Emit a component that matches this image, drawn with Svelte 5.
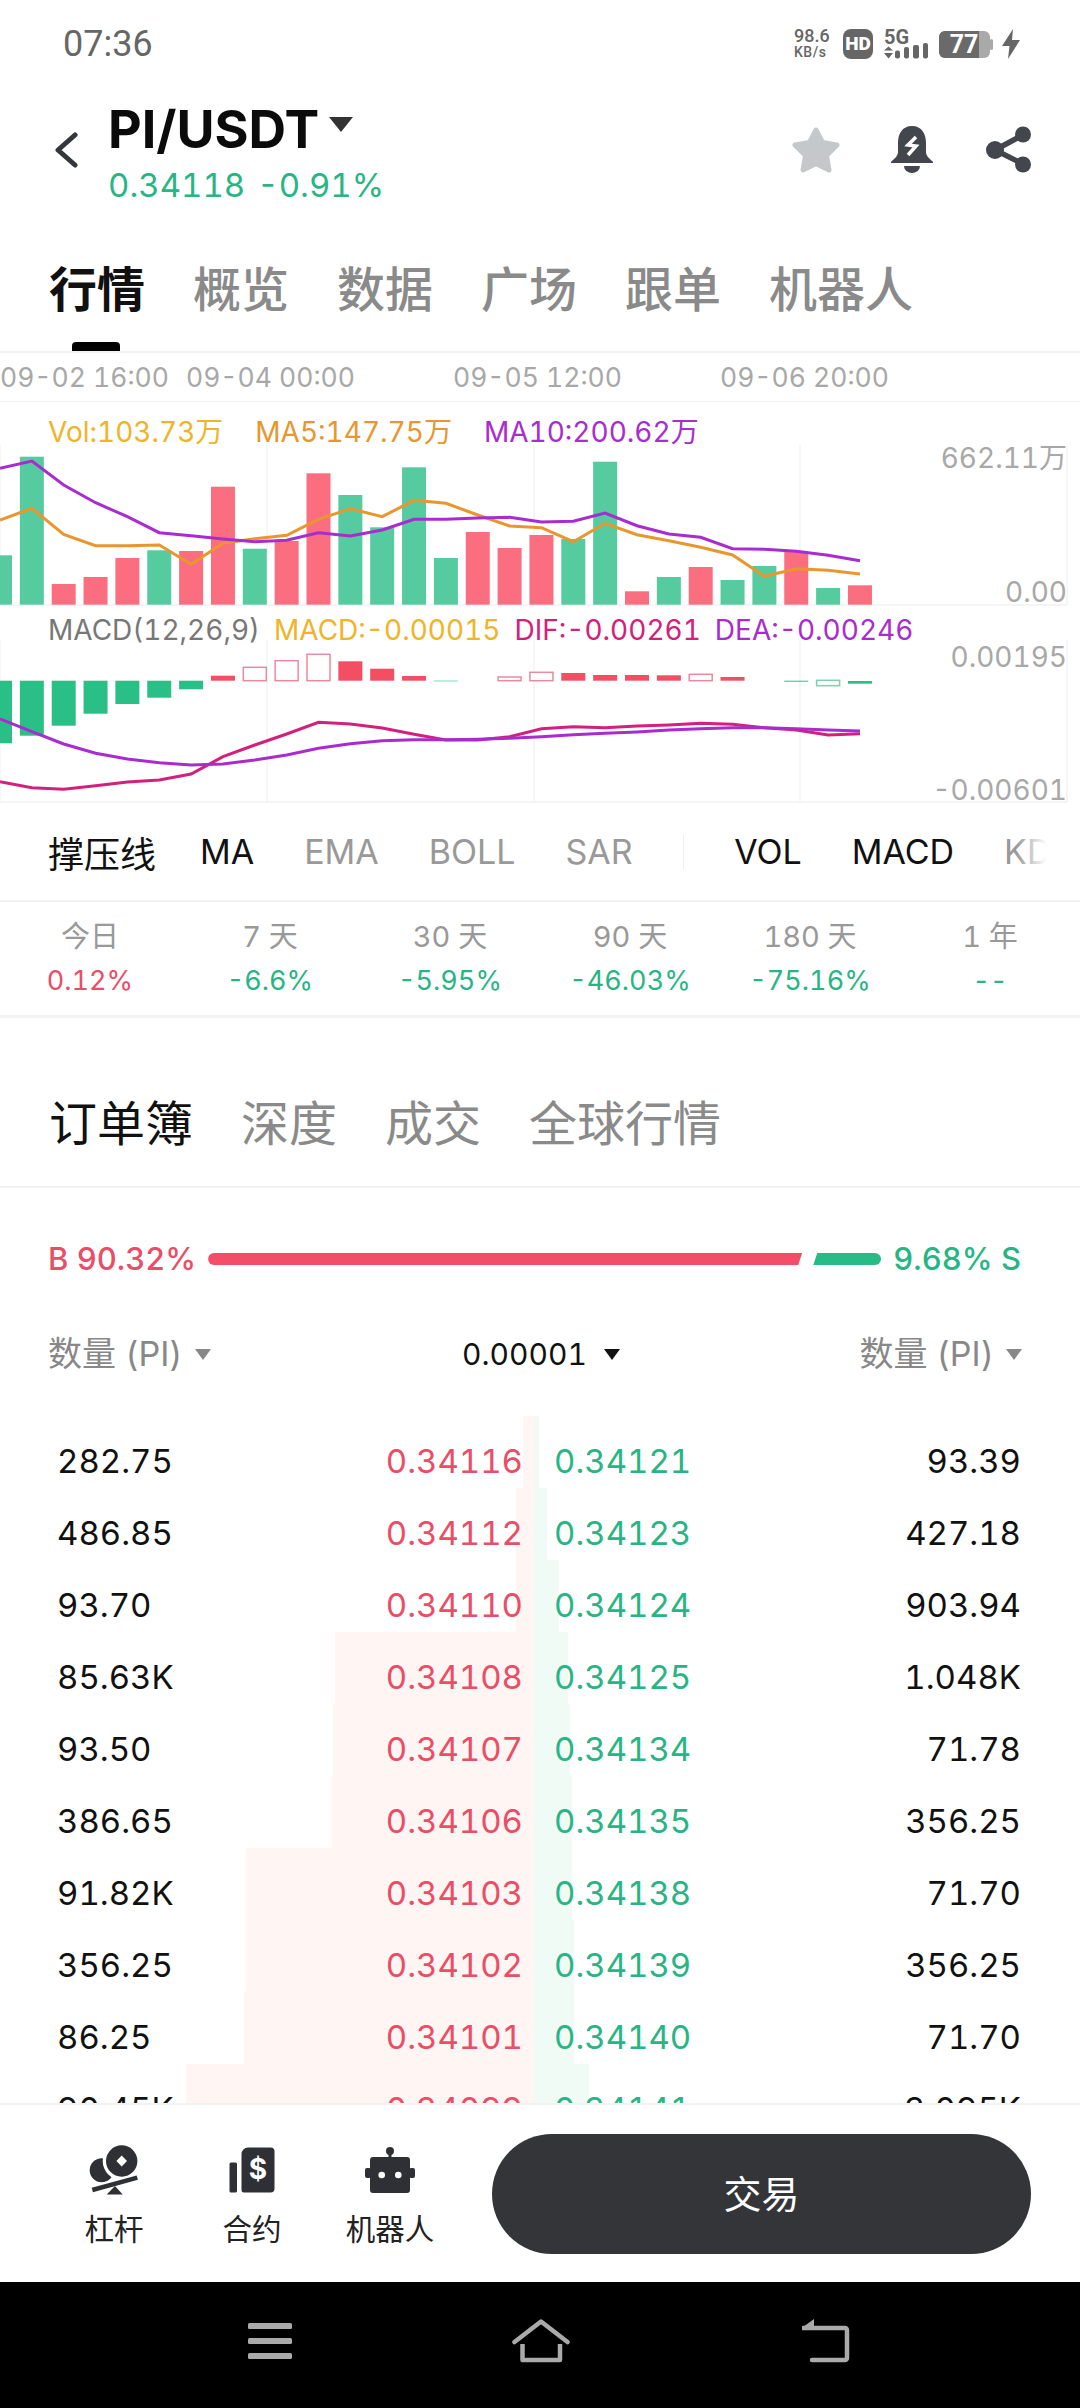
<script>
	const STEP = 31.85;

	// volume bars: top in chart px, green or red
	const volBars = [
		[153.3, 'g'], [54.7, 'g'], [182, 'r'], [175, 'r'], [156, 'r'], [148.3, 'g'], [149, 'r'],
		[84.7, 'r'], [146.7, 'g'], [139, 'r'], [71.3, 'r'], [93, 'g'], [125.3, 'g'], [65.3, 'g'],
		[156, 'g'], [130, 'r'], [146, 'r'], [133, 'r'], [137, 'g'], [59.7, 'g'], [189.3, 'r'],
		[175, 'g'], [165, 'r'], [178, 'g'], [164, 'g'], [149.7, 'r'], [186, 'g'], [183.3, 'r']
	];
	const ma10 = [115, 93, 165, 218, 260, 308, 317, 327, 335, 331, 308, 318, 300, 268, 268, 264, 262, 276, 274, 249, 287, 312, 322, 356, 358, 364, 376, 392];
	const ma5 = [270, 235, 313, 347, 347, 345, 403, 340, 326, 316, 268, 236, 260, 211, 220, 255, 288, 293, 335, 280, 314, 332, 352, 375, 439, 416, 421, 432];

	const BASE = 74.7;
	// macd histogram: top, bottom, kind
	const macdBars = [
		[BASE, 137.3, 'g'], [BASE, 129.7, 'g'], [BASE, 119.7, 'g'], [BASE, 107.7, 'g'], [BASE, 98, 'g'], [BASE, 91.7, 'g'], [BASE, 83.3, 'g'],
		[69.7, BASE, 'r'], [61.3, BASE, 'ro'], [54.7, BASE, 'ro'], [48.3, BASE, 'ro'], [55.3, BASE, 'r'], [62.7, BASE, 'r'], [70, BASE, 'r'],
		[BASE, 75.3, 'g'], null, [71, BASE, 'ro'], [66.3, BASE, 'ro'], [67, BASE, 'r'], [69, BASE, 'r'], [69, BASE, 'r'], [69.3, BASE, 'r'],
		[68.3, BASE, 'ro'], [71, BASE, 'r'], null, [74.7, 75.7, 'g'], [74.3, 79.7, 'go'], [75, 77.7, 'g']
	];
	const dif = [485, 503, 508, 497, 486, 480, 462, 410, 375, 342, 307, 312, 324, 343, 360, 360, 350, 326, 320, 323, 318, 315, 310, 313, 323, 330, 345, 341];
	const dea = [297, 335, 372, 400, 417, 428, 435, 432, 420, 405, 385, 371, 362, 359, 359, 358, 355, 350, 344, 340, 336, 330, 326, 323, 323, 326, 330, 333];

	const line = (vals, off) => vals.map((v, i) => `${(i * STEP).toFixed(1)},${(off + v / 3).toFixed(1)}`).join(' ');

	const times = [
		{ text: '09-02 16:00', left: 0 },
		{ text: '09-04 00:00', left: 186 },
		{ text: '09-05 12:00', left: 453 },
		{ text: '09-06 20:00', left: 720 }
	];

	const periods = [
		{ label: '今日', value: '0.12%', up: true },
		{ label: '7 天', value: '-6.6%' },
		{ label: '30 天', value: '-5.95%' },
		{ label: '90 天', value: '-46.03%' },
		{ label: '180 天', value: '-75.16%' },
		{ label: '1 年', value: '--' }
	];

	// bid, bid price, ask price, ask, red bar left edge, green bar right edge
	const book = [
		['282.75', '0.34116', '0.34121', '93.39', 523, 539],
		['486.85', '0.34112', '0.34123', '427.18', 516, 547],
		['93.70', '0.34110', '0.34124', '903.94', 516, 559],
		['85.63K', '0.34108', '0.34125', '1.048K', 335, 568],
		['93.50', '0.34107', '0.34134', '71.78', 333, 570],
		['386.65', '0.34106', '0.34135', '356.25', 332, 572],
		['91.82K', '0.34103', '0.34138', '71.70', 246, 572],
		['356.25', '0.34102', '0.34139', '356.25', 246, 574],
		['86.25', '0.34101', '0.34140', '71.70', 244, 574],
		['90.45K', '0.34099', '0.34141', '3.095K', 186, 589]
	];
</script>

<div class="page">
	<div class="status">
		<span class="clock">07:36</span>
		<div class="status-icons">
			<div class="net"><span>98.6</span><span class="net-unit">KB/s</span></div>
			<div class="hd">HD</div>
			<svg class="sig" width="45" height="30" viewBox="0 0 45 30">
				<text x="0" y="15" class="sig-text">5G</text>
				<path d="M4.5 17.5 L9 21.5 L0 21.5Z M4.5 29.5 L9 24 L0 24Z" fill="#666" />
				<rect x="11" y="21.5" width="5" height="8" rx="2" fill="#666" />
				<rect x="20" y="18" width="5" height="11.5" rx="2" fill="#666" />
				<rect x="29" y="16" width="6" height="13.5" rx="2" fill="#666" />
				<rect x="39" y="14" width="5" height="15.5" rx="2" fill="#666" />
			</svg>
			<svg class="batt" width="54" height="27" viewBox="0 0 54 27">
				<rect x="0" y="0" width="51" height="27" rx="6" fill="#a9a9a9" />
				<path d="M6 0 H40 V27 H6 A6 6 0 0 1 0 21 V6 A6 6 0 0 1 6 0Z" fill="#6a6a6a" />
				<rect x="51" y="8" width="3" height="11" rx="1.5" fill="#a9a9a9" />
				<text x="25" y="22" class="batt-text">77</text>
			</svg>
			<svg width="18" height="30" viewBox="0 0 18 30">
				<path d="M11 0 L0 17 L7.5 17 L6 30 L18 11 L10 11Z" fill="#666" />
			</svg>
		</div>
	</div>

	<div class="header">
		<svg class="back" width="24" height="36" viewBox="0 0 24 36">
			<path d="M21 3 L4 18 L21 33" fill="none" stroke="#33363b" stroke-width="5" stroke-linecap="round" stroke-linejoin="round" />
		</svg>
		<div class="pair">
			<div class="pair-title">PI/USDT <i class="pair-caret"></i></div>
			<div class="pair-price"><span>0.34118</span><span>-0.91%</span></div>
		</div>
		<div class="actions">
			<svg width="50" height="47" viewBox="0 0 50 47">
				<path d="M25 4 L31.5 16.5 L46 19 L35.5 29.5 L38 44 L25 37.5 L12 44 L14.5 29.5 L4 19 L18.5 16.5Z" fill="#c4c8cb" stroke="#c4c8cb" stroke-width="5" stroke-linejoin="round" />
			</svg>
			<svg class="bell" width="42" height="47" viewBox="0 0 42 47">
				<path d="M21 0 C11 0 7 8 7 17 L7 26 C7 30 3 33 0 36 L0 37 L42 37 L42 36 C39 33 35 30 35 26 L35 17 C35 8 31 0 21 0Z" fill="#43464d" />
				<path d="M13 40 H29 A8 7 0 0 1 13 40Z" fill="#43464d" />
				<path d="M25 11 L17 19 L25 20 L17 29" fill="none" stroke="#fff" stroke-width="3.5" />
			</svg>
			<svg class="share" width="45" height="47" viewBox="0 0 45 47">
				<path d="M37 9 L9 24 L37 38" fill="none" stroke="#43464d" stroke-width="5.5" />
				<circle cx="37" cy="8.5" r="8" fill="#43464d" />
				<circle cx="9" cy="24" r="9" fill="#43464d" />
				<circle cx="37" cy="38.5" r="8" fill="#43464d" />
			</svg>
		</div>
	</div>

	<div class="tabs main-tabs">
		<span class="tab on">行情</span>
		<span class="tab">概览</span>
		<span class="tab">数据</span>
		<span class="tab">广场</span>
		<span class="tab">跟单</span>
		<span class="tab">机器人</span>
	</div>

	<div class="time-axis">
		{#each times as t}
			<span style="left: {t.left}px">{t.text}</span>
		{/each}
	</div>

	<div class="pane vol-pane">
		<svg class="plot" width="1080" height="204" viewBox="0 0 1080 204">
			{#each [0, 267, 534, 800, 1067] as x}
				<line x1={x} x2={x} y1="43" y2="203" stroke="#f3f3f3" stroke-width="1.5" />
			{/each}
			<line x1="0" x2="1067" y1="203" y2="203" stroke="#f2f2f2" stroke-width="1.5" />
			{#each volBars as [top, kind], i}
				<rect x={i * STEP - 12} y={top} width="24" height={202.7 - top} fill={kind === 'g' ? '#55cb9f' : '#fb6e80'} />
			{/each}
			<polyline points={line(ma5, 28)} fill="none" stroke="#e8962e" stroke-width="3" />
			<polyline points={line(ma10, 28)} fill="none" stroke="#a82ccf" stroke-width="3" />
		</svg>
		<div class="legend vol-legend">
			<span class="c-yellow">Vol:103.73万</span>
			<span class="c-orange">MA5:147.75万</span>
			<span class="c-purple">MA10:200.62万</span>
		</div>
		<span class="axis-label" style="top: 36px">662.11万</span>
		<span class="axis-label" style="top: 170px">0.00</span>
	</div>

	<div class="pane macd-pane">
		<svg class="plot" width="1080" height="197" viewBox="0 0 1080 197">
			{#each [0, 267, 534, 800, 1067] as x}
				<line x1={x} x2={x} y1="34" y2="196" stroke="#f3f3f3" stroke-width="1.5" />
			{/each}
			<line x1="0" x2="1067" y1="196" y2="196" stroke="#f0f0f0" stroke-width="1.5" />
			{#each macdBars as bar, i}
				{#if bar}
					{#if bar[2] === 'ro' || bar[2] === 'go'}
						<rect x={i * STEP - 11.5} y={bar[0]} width="23" height={bar[1] - bar[0]} fill="#fff" stroke={bar[2] === 'ro' ? '#e98ba0' : '#7fcfb0'} stroke-width="1.5" />
					{:else}
						<rect x={i * STEP - 12} y={bar[0]} width="24" height={bar[1] - bar[0]} fill={bar[2] === 'g' ? '#2bbf88' : '#f44e63'} />
					{/if}
				{/if}
			{/each}
			<polyline points={line(dif, 14)} fill="none" stroke="#d3207c" stroke-width="3" />
			<polyline points={line(dea, 14)} fill="none" stroke="#a82ccf" stroke-width="3" />
		</svg>
		<div class="legend macd-legend">
			<span class="c-grey">MACD(12,26,9)</span>
			<span class="c-yellow">MACD:-0.00015</span>
			<span class="c-pink">DIF:-0.00261</span>
			<span class="c-purple">DEA:-0.00246</span>
		</div>
		<span class="axis-label" style="top: 31px">0.00195</span>
		<span class="axis-label" style="top: 164px">-0.00601</span>
	</div>

	<div class="indicators">
		<span class="ind-first">撑压线</span>
		<span class="ind-on">MA</span>
		<span>EMA</span>
		<span>BOLL</span>
		<span>SAR</span>
		<i class="ind-sep"></i>
		<span class="ind-on">VOL</span>
		<span class="ind-on">MACD</span>
		<span>KD</span>
	</div>

	<div class="periods">
		{#each periods as p}
			<div class="period">
				<span class="period-label">{p.label}</span>
				<span class={p.up ? 'c-red' : 'c-green'}>{p.value}</span>
			</div>
		{/each}
	</div>

	<div class="tabs book-tabs">
		<span class="tab on">订单簿</span>
		<span class="tab">深度</span>
		<span class="tab">成交</span>
		<span class="tab">全球行情</span>
	</div>

	<div class="ratio">
		<span class="c-red">B 90.32%</span>
		<div class="ratio-bar">
			<div class="ratio-buy"></div>
			<div class="ratio-sell"></div>
		</div>
		<span class="c-green">9.68% S</span>
	</div>

	<div class="book-head">
		<span class="head-side">数量 (PI)<i class="caret"></i></span>
		<span class="head-mid">0.00001<i class="caret dark"></i></span>
		<span class="head-side">数量 (PI)<i class="caret"></i></span>
	</div>

	<div class="book">
		{#each book as [bid, bidPrice, askPrice, ask, redLeft, greenRight]}
			<div class="row">
				<i class="depth red" style="left: {redLeft}px; width: {534 - redLeft}px"></i>
				<i class="depth green" style="width: {greenRight - 534}px"></i>
				<div class="side bid-side">
					<span>{bid}</span>
					<span class="c-red">{bidPrice}</span>
				</div>
				<div class="side ask-side">
					<span class="c-green">{askPrice}</span>
					<span>{ask}</span>
				</div>
			</div>
		{/each}
	</div>

	<div class="footer">
		<div class="foot-item">
			<svg width="50" height="50" viewBox="0 0 50 50">
				<circle cx="12.7" cy="25.3" r="12" fill="#2e3036" />
				<circle cx="32.7" cy="16" r="19" fill="#fff" />
				<line x1="1" y1="45.6" x2="50" y2="32.2" stroke="#fff" stroke-width="9" />
				<circle cx="32.7" cy="16" r="15.7" fill="#2e3036" />
				<path d="M32.7 10.5 L38 16 L32.7 21.5 L27.4 16Z" fill="#fff" />
				<line x1="3.3" y1="45" x2="48.3" y2="32.7" stroke="#2e3036" stroke-width="4.5" />
				<path d="M26 41 L17.7 49.5 L33.7 49.5Z" fill="#2e3036" />
			</svg>
			<span>杠杆</span>
		</div>
		<div class="foot-item">
			<svg width="50" height="50" viewBox="0 0 50 50">
				<rect x="2.5" y="17.5" width="7.5" height="30" rx="1.5" fill="#2e3036" />
				<path d="M21 2.5 H43.5 A4 4 0 0 1 47.5 6.5 V43.5 A4 4 0 0 1 43.5 47.5 H17 A2.5 2.5 0 0 1 14.5 45 V9 A6.5 6.5 0 0 1 21 2.5Z" fill="#2e3036" />
				<text x="31" y="34" class="dollar">$</text>
			</svg>
			<span>合约</span>
		</div>
		<div class="foot-item">
			<svg width="50" height="50" viewBox="0 0 50 50">
				<circle cx="25" cy="6" r="4" fill="#2e3036" />
				<rect x="23.5" y="6" width="3" height="7" fill="#2e3036" />
				<rect x="5" y="12" width="40" height="36" rx="3" fill="#2e3036" />
				<rect x="0" y="23" width="6" height="10" rx="2" fill="#2e3036" />
				<rect x="44" y="23" width="6" height="10" rx="2" fill="#2e3036" />
				<circle cx="16.7" cy="30" r="3.3" fill="#fff" />
				<circle cx="33.3" cy="30" r="3.3" fill="#fff" />
			</svg>
			<span>机器人</span>
		</div>
		<div class="trade">交易</div>
	</div>

	<div class="navbar">
		<svg width="44" height="36" viewBox="0 0 44 36">
			<rect y="0" width="44" height="6" rx="1.5" fill="#aaa" />
			<rect y="15" width="44" height="6" rx="1.5" fill="#aaa" />
			<rect y="30" width="44" height="6" rx="1.5" fill="#aaa" />
		</svg>
		<svg class="nav-home" width="58" height="44" viewBox="0 0 58 44">
			<path d="M2.5 23 L29 2.5 L55.5 23" fill="none" stroke="#aaa" stroke-width="4.5" stroke-linejoin="round" stroke-linecap="round" />
			<path d="M10.5 25 V41 H48 V25" fill="none" stroke="#aaa" stroke-width="4.5" stroke-linejoin="round" />
		</svg>
		<svg width="48" height="44" viewBox="0 0 48 44">
			<path d="M1 9 H43 A2 2 0 0 1 45 11 V39 A2 2 0 0 1 43 41 H10" fill="none" stroke="#aaa" stroke-width="4.5" stroke-linecap="round" />
			<path d="M12 0 L1 8 L12 11Z" fill="#aaa" />
		</svg>
	</div>
</div>

<style>
	:global(body) {
		margin: 0;
		background: #fff;
	}

	.page {
		width: 1080px;
		height: 2408px;
		display: flex;
		flex-direction: column;
		overflow: hidden;
		font-family: Inter, 'Noto Sans CJK SC', sans-serif;
		font-variant-numeric: tabular-nums;
		color: #111;
		background: #fff;
	}

	.c-yellow { color: #f0b429; }
	.c-orange { color: #e8962e; }
	.c-purple { color: #a82ccf; }
	.c-pink { color: #d3207c; }
	.c-grey { color: #777; }
	.c-red { color: #ea4d66; }
	.c-green { color: #28b585; }

	.status {
		height: 86px;
		flex: none;
		display: flex;
		justify-content: space-between;
		align-items: center;
		padding: 2px 60px 0 63px;
		box-sizing: border-box;
	}

	.clock {
		font-family: Roboto, sans-serif;
		font-size: 36px;
		color: #666;
	}

	.status-icons {
		display: flex;
		align-items: center;
	}

	.net {
		display: flex;
		flex-direction: column;
		align-items: flex-start;
		font-family: Roboto, sans-serif;
		font-size: 18px;
		font-weight: 500;
		line-height: 16px;
		color: #666;
		width: 49px;
	}

	.net-unit {
		font-size: 14px;
		letter-spacing: 0.5px;
	}

	.hd {
		width: 30px;
		height: 30px;
		border-radius: 8px;
		background: #666;
		color: #fff;
		font-family: Roboto, sans-serif;
		font-size: 19px;
		font-weight: 900;
		line-height: 30px;
		text-align: center;
		margin-right: 11px;
	}

	.sig {
		margin-right: 10px;
	}

	.sig-text {
		font-family: Roboto, sans-serif;
		font-size: 20px;
		font-weight: 700;
		fill: #666;
	}

	.batt {
		margin-right: 9px;
	}

	.batt-text {
		font-family: Roboto, sans-serif;
		font-size: 25px;
		font-weight: 700;
		fill: #fff;
		text-anchor: middle;
	}

	.header {
		height: 130px;
		flex: none;
		display: flex;
		align-items: flex-start;
		padding: 15px 49px 0 54px;
		box-sizing: border-box;
	}

	.back {
		margin: 31px 30px 0 0;
	}

	.pair {
		flex: 1;
	}

	.pair-title {
		font-size: 52px;
		font-weight: 700;
		line-height: 57px;
		color: #0b0b0b;
		display: flex;
		align-items: center;
		gap: 6px;
	}

	.pair-caret {
		border-left: 12px solid transparent;
		border-right: 12px solid transparent;
		border-top: 15px solid #333;
		margin: 0 0 10px 4px;
	}

	.pair-price {
		margin-top: 7px;
		display: flex;
		gap: 12px;
		font-size: 33px;
		line-height: 40px;
		color: #28b585;
	}

	.actions {
		display: flex;
		align-items: center;
		margin-top: 25px;
	}

	.bell {
		margin: 0 53px 0 50px;
	}

	.tabs {
		flex: none;
		display: flex;
		box-sizing: border-box;
		border-bottom: 2px solid #f2f2f2;
		padding-left: 49px;
		gap: 48px;
	}

	.main-tabs {
		height: 137px;
		padding-top: 44px;
	}

	.book-tabs {
		height: 170px;
		padding-top: 76px;
	}

	.tab {
		position: relative;
		font-size: 48px;
		line-height: 60px;
		color: #8a8a8a;
	}

	.main-tabs .tab {
		font-weight: 500;
	}

	.main-tabs .tab.on {
		font-weight: 700;
	}

	.tab.on {
		color: #111;
	}

	.main-tabs .tab.on::after {
		content: '';
		position: absolute;
		left: 23px;
		top: 82px;
		width: 48px;
		height: 9px;
		border-radius: 4px 4px 0 0;
		background: #000;
	}

	.time-axis {
		position: relative;
		height: 49px;
		flex: none;
		box-sizing: border-box;
		border-bottom: 1.5px solid #f3f3f3;
		font-size: 26.5px;
		line-height: 48px;
		color: #a8a8a8;
	}

	.time-axis span {
		position: absolute;
		top: 0;
		white-space: nowrap;
	}

	.pane {
		position: relative;
		flex: none;
	}

	.vol-pane {
		height: 204px;
	}

	.macd-pane {
		height: 197px;
	}

	.plot {
		position: absolute;
		left: 0;
		top: 0;
	}

	.legend {
		position: relative;
		display: flex;
		padding-left: 48px;
		font-size: 28px;
		line-height: 40px;
		white-space: nowrap;
	}

	.vol-legend {
		padding-top: 10px;
		gap: 32px;
	}

	.macd-legend {
		padding-top: 4px;
		gap: 14px;
	}

	.axis-label {
		position: absolute;
		right: 13px;
		font-size: 28px;
		line-height: 40px;
		color: #a8a8a8;
	}

	.indicators {
		position: relative;
		height: 99px;
		flex: none;
		box-sizing: border-box;
		display: flex;
		align-items: center;
		gap: 50px;
		padding-left: 48px;
		border-bottom: 2px solid #f2f2f2;
		font-size: 34px;
		color: #999;
		overflow: hidden;
		white-space: nowrap;
	}

	.indicators::after {
		content: '';
		position: absolute;
		right: 20px;
		top: 0;
		bottom: 0;
		width: 44px;
		background: linear-gradient(to right, rgba(255, 255, 255, 0), #fff 70%);
	}

	.ind-first {
		font-size: 36px;
		color: #111;
		margin-right: -6px;
	}

	.ind-on {
		color: #111;
	}

	.ind-sep {
		width: 1.5px;
		height: 34px;
		background: #eee;
	}

	.periods {
		height: 116px;
		flex: none;
		box-sizing: border-box;
		display: grid;
		grid-template-columns: repeat(6, 180px);
		padding-top: 15px;
		border-bottom: 3px solid #f3f3f3;
		font-size: 27px;
	}

	.period {
		display: flex;
		flex-direction: column;
		align-items: center;
		line-height: 43px;
	}

	.period-label {
		color: #999;
		font-size: 29px;
		line-height: 40px;
		margin-bottom: 2px;
	}

	.ratio {
		flex: none;
		display: flex;
		align-items: center;
		gap: 12px;
		padding: 49px 59px 0 48px;
		font-size: 31px;
		font-weight: 500;
		line-height: 44px;
	}

	.ratio-bar {
		flex: 1;
		display: flex;
		justify-content: space-between;
		height: 12px;
	}

	.ratio-buy {
		width: 594px;
		border-radius: 6px 0 0 6px;
		background: #f24e68;
		clip-path: polygon(0 0, 100% 0, calc(100% - 4px) 100%, 0 100%);
	}

	.ratio-sell {
		width: 68px;
		border-radius: 0 6px 6px 0;
		background: #28bb87;
		clip-path: polygon(4px 0, 100% 0, 100% 100%, 0 100%);
	}

	.book-head {
		flex: none;
		display: flex;
		justify-content: space-between;
		align-items: center;
		padding: 51px 58px 0 48px;
		font-size: 34px;
		line-height: 44px;
		color: #888;
	}

	.head-side {
		display: flex;
		align-items: center;
	}

	.head-mid {
		display: flex;
		align-items: center;
		margin-left: 12px;
		font-size: 30px;
		color: #111;
	}

	.caret {
		margin-left: 12px;
		border-left: 8px solid transparent;
		border-right: 8px solid transparent;
		border-top: 11px solid #888;
	}

	.caret.dark {
		margin-left: 17px;
		border-top-color: #111;
	}

	.book {
		flex: 1;
		min-height: 0;
		overflow: hidden;
		padding-top: 49px;
	}

	.row {
		position: relative;
		height: 72px;
		display: flex;
		gap: 31px;
		padding: 0 59px 0 57px;
		font-size: 33px;
		line-height: 72px;
	}

	.depth {
		position: absolute;
		top: -9px;
		height: 72px;
		z-index: 0;
	}

	.depth.red {
		background: #fff5f3;
	}

	.depth.green {
		left: 534px;
		background: #f0fbf6;
	}

	.side {
		position: relative;
		z-index: 1;
		display: flex;
		justify-content: space-between;
	}

	.bid-side {
		width: 466px;
	}

	.ask-side {
		flex: 1;
	}

	.footer {
		height: 179px;
		flex: none;
		box-sizing: border-box;
		display: flex;
		align-items: center;
		padding: 0 49px 0 45px;
		border-top: 2px solid #f2f2f2;
		background: #fff;
		position: relative;
		z-index: 2;
	}

	.foot-item {
		width: 138px;
		padding-top: 6px;
		display: flex;
		flex-direction: column;
		align-items: center;
		font-size: 29.5px;
		line-height: 40px;
		color: #222;
	}

	.foot-item span {
		margin-top: 14px;
	}

	.dollar {
		font-family: Inter, sans-serif;
		font-size: 28px;
		font-weight: 700;
		fill: #fff;
		text-anchor: middle;
	}

	.trade {
		margin-left: 33px;
		flex: 1;
		height: 120px;
		border-radius: 60px;
		background: #333539;
		color: #fff;
		font-size: 38px;
		line-height: 120px;
		text-align: center;
	}

	.navbar {
		height: 126px;
		flex: none;
		background: #000;
		position: relative;
		z-index: 2;
		display: flex;
		align-items: center;
		padding: 0 230px 9px 248px;
		justify-content: space-between;
		box-sizing: border-box;
	}

	.nav-home {
		margin-left: -12px;
	}
</style>
